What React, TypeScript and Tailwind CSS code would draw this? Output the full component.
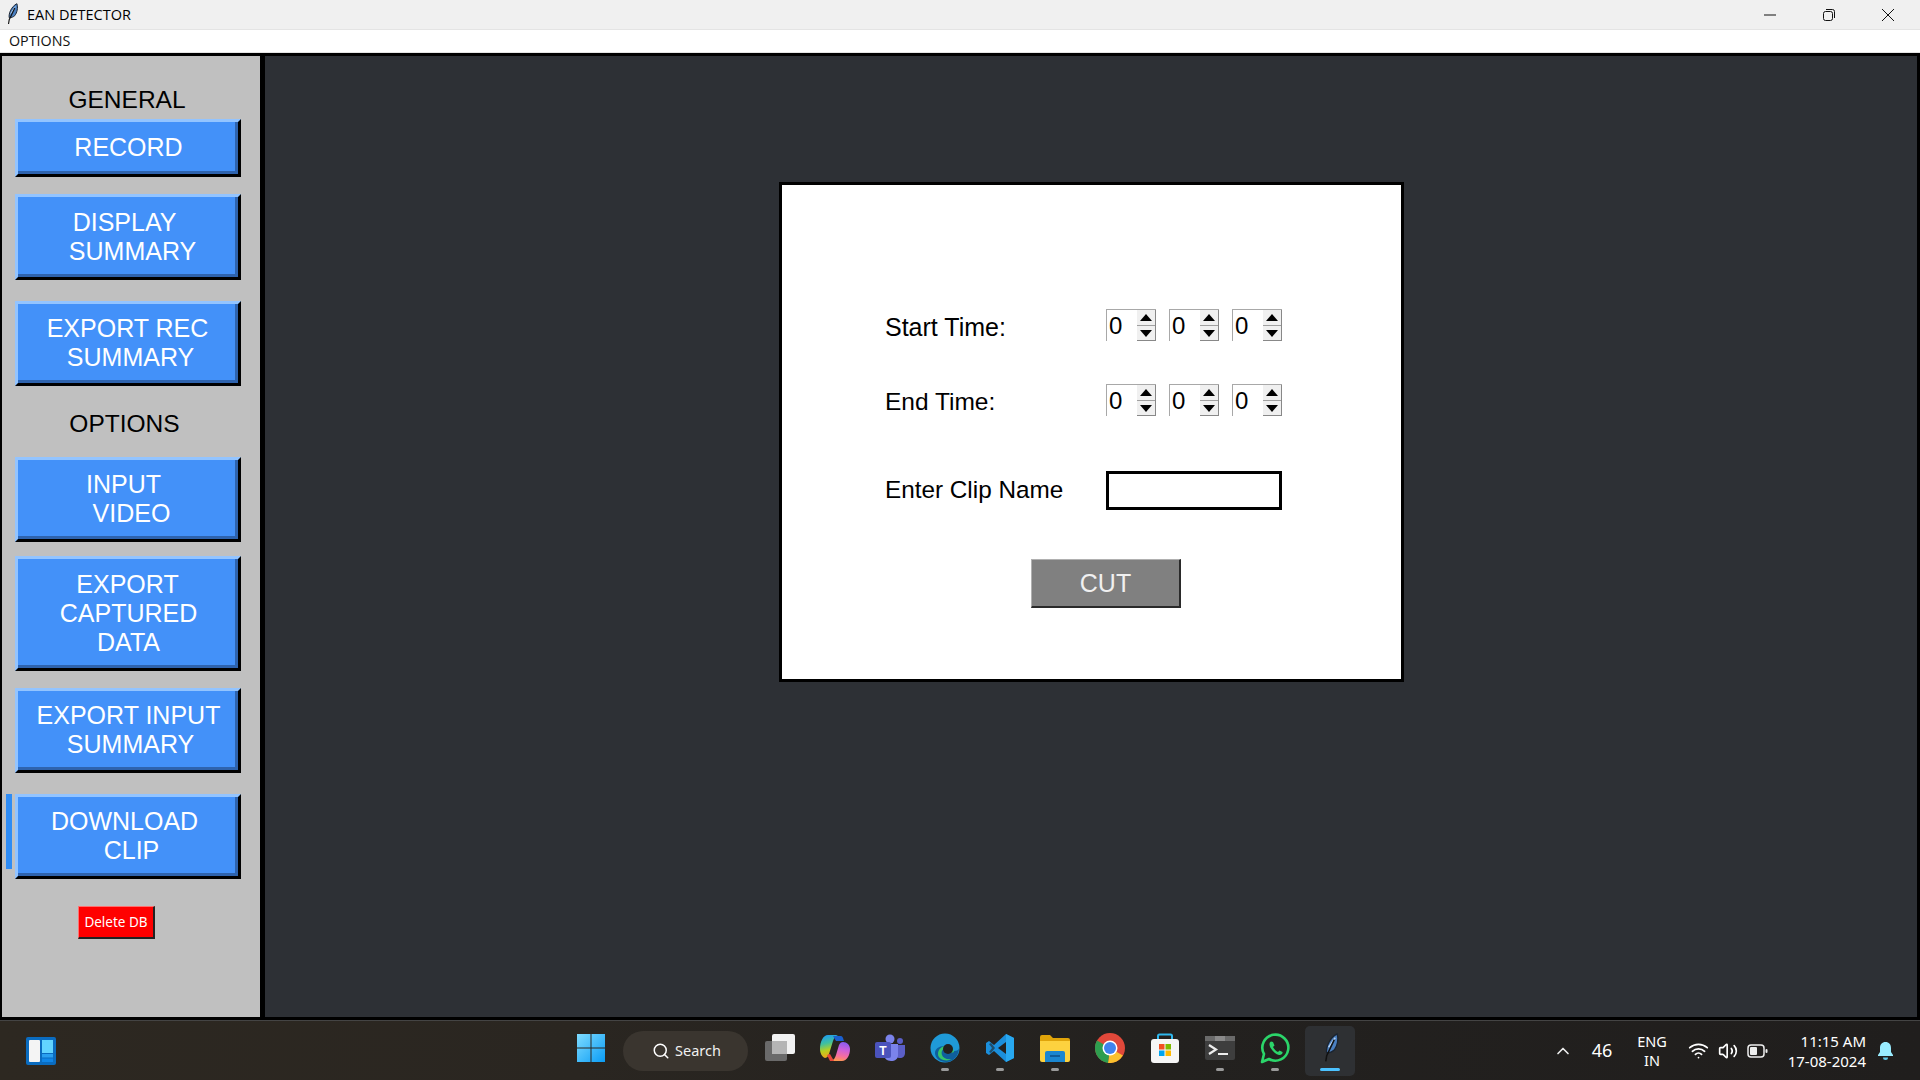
import type { ReactNode } from 'react'
import { ChevronUp, Search, Wifi, Volume2 } from 'lucide-react'

const sans = 'font-["Liberation_Sans",Arial,sans-serif]'

function Feather({ size = 18 }: { size?: number }) {
  return (
    <svg width={size} height={size * 1.6} viewBox="0 0 20 32">
      <path d="M17 1c2 6 0 13-3 17-2 2-5 3-8 3-1-6 3-16 11-20z" fill="#4a7fc0" stroke="#1b2430" strokeWidth="1.4" />
      <path d="M15 5 8 15" stroke="#b9d4f2" strokeWidth="1.4" />
      <path d="M14 7 6 24 5 30" stroke="#111" strokeWidth="1.6" fill="none" />
    </svg>
  )
}

function SideButton({ lines, height, bar = false }: { lines: [string, number][]; height: number; bar?: boolean }) {
  return (
    <div className="flex items-stretch ml-[-9px]">
      <div className={bar ? 'w-[6px] h-[75px] mr-[3px] bg-[#2e8cf5]' : 'w-[6px] mr-[3px]'} />
      <div
        className="w-[226px] border-[3px] border-t-[#93c4ff] border-l-[#93c4ff] border-r-black border-b-black"
        style={{ height }}
      >
        <div className="h-full pt-[2px] border-r-[3px] border-b-[3px] border-r-[#2e63ae] border-b-[#2e63ae] bg-[#4391f9] flex flex-col items-center justify-center text-white text-[25px] leading-[29px]">
          {lines.map(([text, shift]) => (
            <span key={text} style={{ transform: `translateX(${shift + 2}px)` }}>
              {text}
            </span>
          ))}
        </div>
      </div>
    </div>
  )
}

function Spin() {
  return (
    <div className="w-[50px] h-[32px] flex border-t border-l border-[#a8a8a8] bg-white">
      <span className="w-[31px] pl-[2px] pt-[1px] text-[24px] leading-[30px] text-black">0</span>
      <div className="w-[19px] flex flex-col border-b border-r border-[#888] bg-[#f0f0f0]">
        <div className="h-[15px] flex items-center justify-center">
          <div className="border-x-[6px] border-x-transparent border-b-[7px] border-b-black" />
        </div>
        <div className="h-px bg-[#a0a0a0]" />
        <div className="flex-1 flex items-center justify-center">
          <div className="border-x-[6px] border-x-transparent border-t-[7px] border-t-black" />
        </div>
      </div>
    </div>
  )
}

function TimeRow({ label, size }: { label: string; size: string }) {
  return (
    <div className="flex items-center h-[32px]">
      <span className={`w-[221px] pt-[5px] text-black ${size}`}>{label}</span>
      <div className="flex gap-[13px]">
        <Spin />
        <Spin />
        <Spin />
      </div>
    </div>
  )
}

function TaskIcon({ children, dot = false, active = false }: { children: ReactNode; dot?: boolean; active?: boolean }) {
  return (
    <div className={`w-[50px] h-[50px] flex flex-col items-center rounded-[5px] ${active ? 'bg-[#2e3033]' : ''}`}>
      <div className="h-[42px] flex items-center justify-center pt-[3px]">{children}</div>
      {dot && <div className="w-[8px] h-[3px] rounded-full bg-[#9a9a9a]" />}
      {active && <div className="w-[20px] h-[3px] rounded-full bg-[#4cc2ff]" />}
    </div>
  )
}

export default function App() {
  return (
    <div className={`w-[1920px] h-[1080px] overflow-hidden flex flex-col bg-black ${sans}`}>
      {/* title bar */}
      <div className="h-[29px] bg-[#f0f0f0] flex items-center shrink-0">
        <div className="w-[27px] pl-[5px] flex items-center">
          <Feather size={14} />
        </div>
        <span className="text-[14.5px] text-black font-['Open_Sans',sans-serif]">EAN DETECTOR</span>
        <div className="ml-auto flex items-center text-[#111]">
          <svg width="14" height="14" viewBox="0 0 14 14" className="mr-[45px]">
            <path d="M1 7h12" stroke="currentColor" strokeWidth="1" />
          </svg>
          <svg width="14" height="14" viewBox="0 0 14 14" className="mr-[45px]">
            <rect x="1.5" y="3.5" width="9" height="9" rx="2" fill="none" stroke="currentColor" />
            <path d="M4 1.5h6.5a2 2 0 0 1 2 2V10" fill="none" stroke="currentColor" />
          </svg>
          <svg width="14" height="14" viewBox="0 0 14 14" className="mr-[25px]">
            <path d="M1 1l12 12M13 1 1 13" stroke="currentColor" strokeWidth="1" />
          </svg>
        </div>
      </div>
      {/* menu */}
      <div className="h-[24px] bg-white border-t border-[#e4e4e4] border-b border-b-[#e4e4e4] flex items-center pl-[9px] text-[14.3px] text-[#111] font-['Open_Sans',sans-serif] shrink-0">
        OPTIONS
      </div>

      <div className="h-[967px] flex pt-[3px] shrink-0">
        {/* sidebar */}
        <div className="w-[258px] ml-[2px] h-[961px] bg-[#c0c0c0] pl-[13px] text-black">
          <div className="w-[226px] pt-[30px] h-[63px] text-center text-[24.5px] leading-[28px] pr-[2px]">GENERAL</div>
          <div className="flex flex-col">
            <SideButton height={58} lines={[['RECORD', 0]]} />
            <div className="h-[17px]" />
            <SideButton height={86} lines={[['DISPLAY', -4], ['SUMMARY', 4]]} />
            <div className="h-[21px]" />
            <SideButton height={85} lines={[['EXPORT REC', -1], ['SUMMARY', 2]]} />
            <div className="h-[71px] pt-[6px] flex items-center justify-center w-[226px] pr-[7px] text-[24.5px]">OPTIONS</div>
            <SideButton height={85} lines={[['INPUT', -5], ['VIDEO', 3]]} />
            <div className="h-[14px]" />
            <SideButton height={115} lines={[['EXPORT', -1], ['CAPTURED', 0], ['DATA', 0]]} />
            <div className="h-[17px]" />
            <SideButton height={85} lines={[['EXPORT INPUT', 0], ['SUMMARY', 2]]} />
            <div className="h-[21px]" />
            <SideButton height={85} bar lines={[['DOWNLOAD', -4], ['CLIP', 3]]} />
          </div>
          <div className="mt-[27px] ml-[63px] w-[77px] h-[33px] bg-[#ff0000] border-t border-l border-[#ff7070] border-b-2 border-r-2 border-b-[#222] border-r-[#222] flex items-center justify-center text-white text-[13.5px] font-['Noto_Sans',sans-serif]">
            Delete DB
          </div>
        </div>
        <div className="w-[5px]" />

        {/* main */}
        <div className="w-[1652px] h-[961px] bg-[#2d3035] pt-[126px] pl-[514px]">
          <div className="w-[625px] h-[500px] bg-white border-[3px] border-black pl-[103px] pt-[124px]">
            <TimeRow label="Start Time:" size="text-[25px]" />
            <div className="h-[43px]" />
            <TimeRow label="End Time:" size="text-[24.5px]" />
            <div className="flex items-center h-[39px] mt-[55px]">
              <span className="w-[221px] text-[24.3px] text-black">Enter Clip Name</span>
              <div className="w-[176px] h-[39px] border-[3px] border-black bg-white" />
            </div>
            <div className="ml-[146px] mt-[49px] w-[150px] h-[49px] pt-[2px] bg-[#808080] border-t border-l border-[#b0b0b0] border-b-2 border-r-2 border-b-[#2a2a2a] border-r-[#2a2a2a] flex items-center justify-center text-[25px] text-[#f0f0f0]">
              CUT
            </div>
          </div>
        </div>
      </div>

      {/* taskbar */}
      <div className="h-[60px] shrink-0 border-t border-[#444] flex items-center pl-[26px] text-white font-['Noto_Sans',sans-serif] bg-[linear-gradient(90deg,#2d2821_0%,#2a2621_30%,#23211f_60%,#201e1d_100%)]">
        <svg width="30" height="28" viewBox="0 0 30 28" className="shrink-0">
          <rect width="30" height="28" rx="2" fill="#0a6cc0" />
          <rect x="3" y="3" width="11" height="22" rx="1" fill="#f4f4f4" />
          <rect x="16" y="3" width="11" height="13" fill="#62d4ff" />
          <rect x="16" y="17" width="11" height="3.5" fill="#2aa0f0" />
          <rect x="16" y="21.5" width="11" height="3.5" fill="#0f86e8" />
        </svg>
        <div className="ml-[510px] flex items-center gap-[7px]">
          <TaskIcon>
            <svg width="30" height="30" viewBox="0 0 30 30">
              <defs>
                <linearGradient id="win" x1="0" y1="0" x2="1" y2="1">
                  <stop offset="0" stopColor="#7fdcff" />
                  <stop offset="1" stopColor="#0a9cf5" />
                </linearGradient>
              </defs>
              <path d="M1 1h13.5v13.5H1zM15.5 1H29v13.5H15.5zM1 15.5h13.5V29H1zM15.5 15.5H29V29H15.5z" fill="url(#win)" />
            </svg>
          </TaskIcon>
          <div className="w-[125px] h-[40px] rounded-full bg-[#3a352f] flex items-center pl-[29px] gap-[5px]">
            <Search size={18} strokeWidth={2} className="text-white" />
            <span className="text-[14.5px] text-[#f0f0f0]">Search</span>
          </div>
          <div className="flex items-center gap-[5px]">
            <TaskIcon>
              <svg width="30" height="30" viewBox="0 0 30 30">
                <rect x="0" y="8" width="22" height="20" rx="2" fill="#6a6a6a" />
                <rect x="7" y="1" width="23" height="20" rx="2" fill="#f2f2f2" />
                <rect x="7" y="8" width="15" height="13" fill="#b5b5b5" />
              </svg>
            </TaskIcon>
            <TaskIcon>
              <svg width="30" height="28" viewBox="0 0 30 28">
                <defs>
                  <linearGradient id="cpa" x1="0.3" y1="0" x2="0.5" y2="1">
                    <stop offset="0" stopColor="#1f9cf0" />
                    <stop offset="0.35" stopColor="#3fc0a0" />
                    <stop offset="0.65" stopColor="#b8d020" />
                    <stop offset="1" stopColor="#f6a01c" />
                  </linearGradient>
                  <linearGradient id="cpb" x1="0.6" y1="0" x2="0.4" y2="1">
                    <stop offset="0" stopColor="#8a5cf0" />
                    <stop offset="0.4" stopColor="#d060d8" />
                    <stop offset="0.75" stopColor="#f8709a" />
                    <stop offset="1" stopColor="#fb9a50" />
                  </linearGradient>
                </defs>
                <path d="M8 1h10c-3 1-4 3-5 6L9 20c-1 3-3 4-4 4-3-1-5-5-5-9C0 8 3 1 8 1z" fill="url(#cpa)" />
                <path d="M13 2h7c3 0 3 2 4 5h-8z" fill="#1a5fd0" />
                <path d="M22 27H11c3-1 4-3 5-6l3-10c1-2 2-3 4-3 4 0 7 3 7 7 0 6-3 12-8 12z" fill="url(#cpb)" />
                <path d="M10 27l-3-6 3-1 4 7z" fill="#e8483a" />
              </svg>
            </TaskIcon>
            <TaskIcon>
              <svg width="30" height="28" viewBox="0 0 30 28">
                <circle cx="15" cy="5" r="4.5" fill="#7b83eb" />
                <circle cx="25" cy="7" r="3" fill="#5b5fc7" />
                <path d="M20 11h10v8c0 3-2 5-5 5s-5-2-5-5z" fill="#5b5fc7" />
                <path d="M9 10h14v11c0 4-3 6-7 6s-7-3-7-6z" fill="#7b83eb" />
                <rect x="0" y="8" width="16" height="16" rx="2" fill="#4b53bc" />
                <text x="8" y="20.5" textAnchor="middle" fontSize="12" fontWeight="700" fill="#fff" fontFamily="Liberation Sans">T</text>
              </svg>
            </TaskIcon>
            <TaskIcon dot>
              <svg width="30" height="30" viewBox="0 0 30 30">
                <circle cx="15" cy="15" r="14.5" fill="#1f9ad8" />
                <path d="M29 15c0 8-6 14-13 14-6 0-11-4-11-9 0-4 4-7 9-7 4 0 7 2 7 5h3c3 0 5-1 5-3z" fill="#0f5f9c" />
                <path d="M8 21c0-5 4-8 8-8 5 0 8 3 8 6-2 1-4 1-6 0 1-2-1-3-3-3-3 0-4 3-3 6 1 3 5 5 10 4-5 3-14 1-14-5z" fill="#35c56c" />
                <circle cx="18" cy="16" r="5" fill="#23211f" />
              </svg>
            </TaskIcon>
            <TaskIcon dot>
              <svg width="30" height="30" viewBox="0 0 30 30">
                <path d="M21 1 29 5v20l-8 4L9 18l-5 4-3-2V10l3-2 5 4z" fill="#1b8fdc" />
                <path d="M21 1 29 5v20l-8 4z" fill="#28a8f0" />
                <path d="M21 9v12l-8-6z" fill="#23211f" />
                <path d="M4 11l2-1 4 5-4 5-2-1 3-4z" fill="#23211f" opacity="0.6" />
              </svg>
            </TaskIcon>
            <TaskIcon dot>
              <svg width="30" height="28" viewBox="0 0 30 28">
                <path d="M0 3a2 2 0 0 1 2-2h8l3 3h15a2 2 0 0 1 2 2v4H0z" fill="#e0a40a" />
                <path d="M0 7h30v19a2 2 0 0 1-2 2H2a2 2 0 0 1-2-2z" fill="#fdd23f" />
                <path d="M5 28v-9a2 2 0 0 1 2-2h16a2 2 0 0 1 2 2v9z" fill="#1a86d0" />
                <rect x="10" y="21" width="10" height="2" fill="#0f5c99" />
              </svg>
            </TaskIcon>
            <TaskIcon>
              <svg width="30" height="30" viewBox="0 0 30 30">
                <circle cx="15" cy="15" r="15" fill="#e0483a" />
                <path d="M15 15 27.900 22.500A15 15 0 0 1 13 29.900z" fill="#fbc02d" />
                <path d="M15 15 13 29.900A15 15 0 0 1 2 7.500z" fill="#2e9e4f" />
                <circle cx="15" cy="15" r="7.500" fill="#fff" />
                <circle cx="15" cy="15" r="6" fill="#3f83ee" />
              </svg>
            </TaskIcon>
            <TaskIcon>
              <svg width="30" height="30" viewBox="0 0 30 30">
                <path d="M8 7V3a1.500 1.500 0 0 1 1.500-1.500h11A1.500 1.500 0 0 1 22 3v4" fill="none" stroke="#2fb8ee" strokeWidth="2" />
                <rect x="1" y="6" width="28" height="24" rx="3" fill="#f6f6f6" />
                <rect x="9" y="11" width="5.500" height="5.500" fill="#f25022" />
                <rect x="15.500" y="11" width="5.500" height="5.500" fill="#7fba00" />
                <rect x="9" y="17.500" width="5.500" height="5.500" fill="#00a4ef" />
                <rect x="15.500" y="17.500" width="5.500" height="5.500" fill="#ffb900" />
              </svg>
            </TaskIcon>
            <TaskIcon dot>
              <svg width="30" height="24" viewBox="0 0 30 24">
                <rect width="30" height="24" rx="2" fill="#3e3e3e" />
                <rect width="30" height="5" fill="#6a6a6a" />
                <rect x="10" width="10" height="5" fill="#8a8a8a" />
                <path d="M4 9l7 4.500L4 18" fill="none" stroke="#eee" strokeWidth="2.200" />
                <rect x="13" y="17" width="10" height="2" fill="#eee" />
              </svg>
            </TaskIcon>
            <TaskIcon dot>
              <svg width="31" height="31" viewBox="0 0 31 31">
                <path d="M2 29l2-8a13 13 0 1 1 5 5z" fill="none" stroke="#2bd56a" strokeWidth="2.600" strokeLinejoin="round" />
                <path d="M11 8.500c-2 1-2 4 0 7s5 6 8 6.500c2 .3 4-1 3.500-3l-3-1.500-1.500 1.500c-2-.5-4-3-5-5l1.500-1.500-1.500-3.500z" fill="#2bd56a" />
              </svg>
            </TaskIcon>
            <TaskIcon active>
              <Feather size={19} />
            </TaskIcon>
          </div>
        </div>
        <div className="ml-[198px] flex items-center">
          <ChevronUp size={20} strokeWidth={2} className="text-[#eee]" />
          <span className="ml-[15px] w-[28px] text-[18px] text-center">46</span>
          <div className="ml-[16px] w-[40px] flex flex-col items-center text-[14.5px] leading-[19px]">
            <span>ENG</span>
            <span>IN</span>
          </div>
          <Wifi size={21} className="ml-[16px]" />
          <Volume2 size={20} className="ml-[9px]" />
          <svg width="21" height="14" viewBox="0 0 21 14" className="ml-[9px]">
            <rect x="1" y="1" width="16" height="12" rx="3" fill="none" stroke="#eee" strokeWidth="1.500" />
            <rect x="3" y="3" width="7" height="8" rx="1" fill="#eee" />
            <rect x="18.500" y="5" width="2" height="4" rx="1" fill="#eee" />
          </svg>
          <div className="ml-[14px] w-[84px] flex flex-col items-end text-[15px] leading-[20px]">
            <span>11:15 AM</span>
            <span>17-08-2024</span>
          </div>
          <svg width="17" height="20" viewBox="0 0 17 20" className="ml-[11px]">
            <path d="M8.500 1C5 1 3 3.500 3 7v4l-2 3v1h15v-1l-2-3V7c0-3.500-2-6-5.500-6z" fill="#99ecff" />
            <path d="M6 16.500a2.500 2.500 0 0 0 5 0z" fill="#60c8e8" />
          </svg>
        </div>
      </div>
    </div>
  )
}
